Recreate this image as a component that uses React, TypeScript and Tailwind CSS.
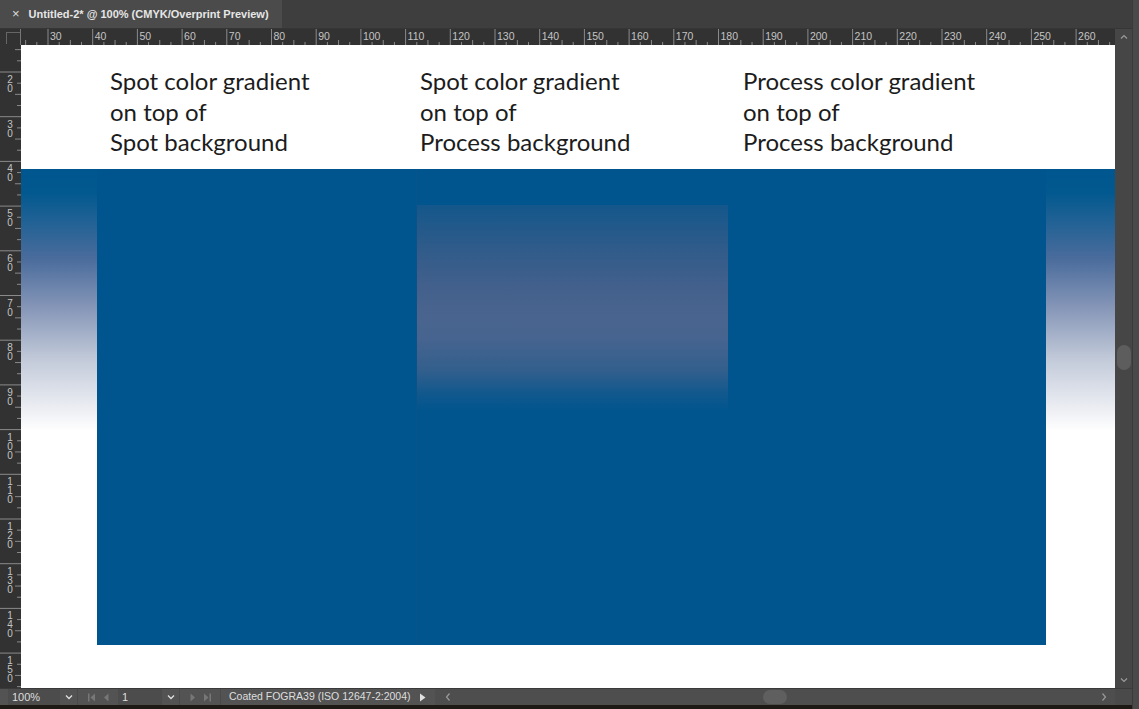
import React from 'react';

const UNIT = 4.47;

function HRuler() {
  const ticks: React.ReactNode[] = [];
  for (let v = 20; v <= 270; v += 2.5) {
    const x = 27 + (v - 30) * UNIT;
    if (x < 0 || x > 1094) continue;
    const major = v % 10 === 0;
    const mid = v % 5 === 0;
    ticks.push(
      <line
        key={v}
        x1={x}
        x2={x}
        y1={major ? 0 : mid ? 11 : 13}
        y2={16}
        stroke="#8a8a8a"
        strokeWidth={1}
      />
    );
    if (major) {
      ticks.push(
        <text key={'t' + v} x={x + 2} y={11} fontSize={10.5} fill="#c4c4c4" fontFamily="Liberation Sans, Arial, sans-serif">
          {v}
        </text>
      );
    }
  }
  return (
    <svg width={1094} height={16} className="block">
      {ticks}
    </svg>
  );
}

function VRuler() {
  const ticks: React.ReactNode[] = [];
  for (let v = 10; v <= 160; v += 2.5) {
    const y = 27 + (v - 20) * UNIT;
    const major = v % 10 === 0;
    const mid = v % 5 === 0;
    ticks.push(
      <line
        key={v}
        x1={major ? 0 : mid ? 15 : 17}
        x2={21}
        y1={y}
        y2={y}
        stroke="#8a8a8a"
        strokeWidth={1}
      />
    );
    if (major) {
      String(v)
        .split('')
        .forEach((d, i) => {
          const by = y + 11 + i * 9;
          if (by < 9 || by > 642) return;
          ticks.push(
            <text
              key={`d${v}-${i}`}
              x={10}
              y={by}
              fontSize={10}
              textAnchor="middle"
              fill="#c4c4c4"
              fontFamily="Liberation Sans, Arial, sans-serif"
            >
              {d}
            </text>
          );
        });
    }
  }
  return (
    <svg width={21} height={643} className="block">
      {ticks}
    </svg>
  );
}

const labels = [
  ['Spot color gradient', 'on top of', 'Spot background'],
  ['Spot color gradient', 'on top of', 'Process background'],
  ['Process color gradient', 'on top of', 'Process background'],
];

const sideFade =
  'bg-[linear-gradient(to_bottom,#00568f_0px,#02598f_24px,#4a6c9c_90px,#8797b8_140px,#c2cad9_190px,#eceef3_240px,#ffffff_262px,#ffffff_100%)]';

function Canvas() {
  return (
    <div className="flex-1 bg-white flex flex-col" style={{ fontFamily: 'Lato, "Open Sans", sans-serif' }}>
      <div className="h-[124px] flex pl-[89px] pt-[21px] text-[24px] leading-[30.5px] text-[#1c1c1c]">
        <div className="w-[310px]">
          {labels[0].map((l) => (
            <div key={l}>{l}</div>
          ))}
        </div>
        <div className="w-[323px]">
          {labels[1].map((l) => (
            <div key={l}>{l}</div>
          ))}
        </div>
        <div>
          {labels[2].map((l) => (
            <div key={l}>{l}</div>
          ))}
        </div>
      </div>
      <div className="h-[476px] flex">
        <div className={`w-[76px] ${sideFade}`} />
        <div className="w-[319px] bg-[#00558e]" />
        <div className="w-[312px] bg-[#00558e] border-l border-[#0a5288] pt-[36px]">
          <div className="h-[206px] bg-[linear-gradient(to_bottom,#14578b_0%,#2e5b8a_20%,#43608c_40%,#49658f_55%,#46648f_65%,#335f8d_80%,#10588d_92%,#00558e_100%)]" />
        </div>
        <div className="w-[318px] bg-[#00558e]" />
        <div className={`flex-1 ${sideFade}`} />
      </div>
      <div className="flex-1" />
    </div>
  );
}

export default function App() {
  return (
    <div className="w-[1139px] h-[709px] flex bg-[#1d1a16] overflow-hidden" style={{ fontFamily: '"Liberation Sans", Arial, sans-serif' }}>
      <div className="flex-1 flex flex-col">
        <div className="h-[29px] flex bg-[#3e3e3e] border-b border-[#363636]">
          <div className="w-[282px] h-[28px] bg-[#4b4b4b] flex items-center text-[11px] font-bold text-[#e6e6e6]">
            <span className="pl-[12px] pr-[9px] text-[13px] font-normal text-[#dcdcdc]">×</span>
            <span className="whitespace-nowrap">Untitled-2* @ 100% (CMYK/Overprint Preview)</span>
          </div>
        </div>
        <div className="flex-1 flex">
          <div className="flex-1 flex flex-col">
            <div className="h-[16px] flex bg-[#323232]">
              <div className="w-[21px] border-r border-[#777] relative">
                <div className="absolute left-[6px] top-[3px] w-[14px] h-[12px] border-l border-t border-[#666]" />
              </div>
              <HRuler />
            </div>
            <div className="flex-1 flex">
              <div className="w-[21px] bg-[#323232] overflow-hidden">
                <VRuler />
              </div>
              <Canvas />
            </div>
          </div>
          <div className="w-[17px] bg-[#464646] flex flex-col items-center py-[3px] text-[#a8a8a8]">
            <svg width={10} height={10} viewBox="0 0 10 10">
              <path d="M2 6.5 L5 3.5 L8 6.5" fill="none" stroke="#9a9a9a" strokeWidth={1.2} />
            </svg>
            <div className="w-[14px] h-[25px] rounded-full bg-[#5d5d5d] mt-[303px]" />
            <div className="flex-1" />
            <svg width={10} height={10} viewBox="0 0 10 10">
              <path d="M2 3.5 L5 6.5 L8 3.5" fill="none" stroke="#9a9a9a" strokeWidth={1.2} />
            </svg>
          </div>
        </div>
        <div className="h-[17px] bg-[#535353] flex items-center text-[11px] text-[#dedede] border-t border-[#3a3a3a] whitespace-nowrap">
          <div className="w-[52px] ml-[8px] h-full bg-[#4c4c4c] flex items-center pl-[4px]">100%</div>
          <div className="w-[17px] h-full flex items-center justify-center">
            <svg width={10} height={10} viewBox="0 0 10 10">
              <path d="M2 3.5 L5 6.5 L8 3.5" fill="none" stroke="#e0e0e0" strokeWidth={1.3} />
            </svg>
          </div>
          <div className="w-[41px] h-full flex items-center justify-center gap-[7px] border-l border-[#4a4a4a]">
            <svg width={8} height={9} viewBox="0 0 8 9">
              <rect x={0} y={0.5} width={1.5} height={8} fill="#777" />
              <path d="M7 0.5 L2.5 4.5 L7 8.5 Z" fill="#777" />
            </svg>
            <svg width={6} height={9} viewBox="0 0 6 9">
              <path d="M5.5 0.5 L1 4.5 L5.5 8.5 Z" fill="#777" />
            </svg>
          </div>
          <div className="w-[44px] h-full bg-[#4c4c4c] flex items-center pl-[4px]">1</div>
          <div className="w-[17px] h-full flex items-center justify-center">
            <svg width={10} height={10} viewBox="0 0 10 10">
              <path d="M2 3.5 L5 6.5 L8 3.5" fill="none" stroke="#e0e0e0" strokeWidth={1.3} />
            </svg>
          </div>
          <div className="w-[41px] h-full flex items-center justify-center gap-[7px] border-l border-[#4a4a4a]">
            <svg width={6} height={9} viewBox="0 0 6 9">
              <path d="M0.5 0.5 L5 4.5 L0.5 8.5 Z" fill="#777" />
            </svg>
            <svg width={8} height={9} viewBox="0 0 8 9">
              <path d="M1 0.5 L5.5 4.5 L1 8.5 Z" fill="#777" />
              <rect x={6.5} y={0.5} width={1.5} height={8} fill="#777" />
            </svg>
          </div>
          <div className="pl-[8px] w-[198px] border-l border-[#4a4a4a] h-full flex items-center text-[10.5px] whitespace-nowrap overflow-hidden">
            Coated FOGRA39 (ISO 12647-2:2004)
          </div>
          <svg width={8} height={9} viewBox="0 0 8 9" className="ml-[1px] shrink-0">
            <path d="M1 0.5 L6.5 4.5 L1 8.5 Z" fill="#e0e0e0" />
          </svg>
          <div className="flex-1 h-full flex items-center pl-[10px] pr-[8px] bg-[#4e4e4e] ml-[8px]">
            <svg width={6} height={10} viewBox="0 0 6 10">
              <path d="M4.5 1.5 L1.5 5 L4.5 8.5" fill="none" stroke="#9a9a9a" strokeWidth={1.2} />
            </svg>
            <div className="w-[312px]" />
            <div className="w-[24px] h-[14px] rounded-full bg-[#5f5f5f]" />
            <div className="flex-1" />
            <svg width={6} height={10} viewBox="0 0 6 10">
              <path d="M1.5 1.5 L4.5 5 L1.5 8.5" fill="none" stroke="#9a9a9a" strokeWidth={1.2} />
            </svg>
          </div>
          <div className="w-[17px] h-full bg-[#4a4a4a]" />
        </div>
        <div className="h-[4px]" />
      </div>
      <div className="w-[7px] bg-[#4a4a4a] border-l border-[#3a3a3a]" />
    </div>
  );
}
